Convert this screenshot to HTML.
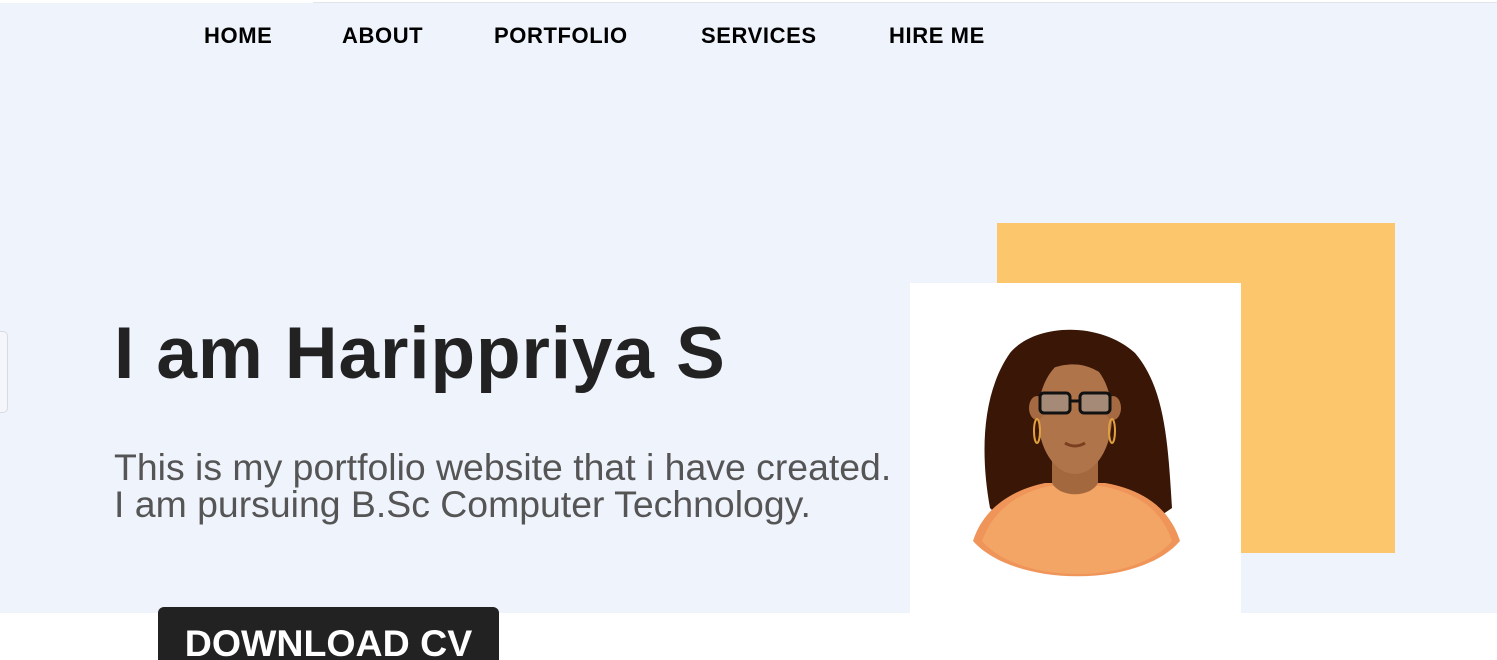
<!DOCTYPE html>
<html><head><style>
html,body{margin:0;width:1497px;height:660px;overflow:hidden}
body{background:#fff;font-family:"Liberation Sans",Arial,sans-serif;position:relative}
.bg{position:absolute;left:0;top:3px;width:1497px;height:610px;background:#eff3fc}
.topline{position:absolute;left:313px;top:2px;width:1184px;height:1px;background:#e2e4ea}
nav a{position:absolute;top:23px;font-size:22px;font-weight:bold;color:#000;text-decoration:none;letter-spacing:0.6px}
h1{position:absolute;left:114px;top:312px;margin:0;font-size:73px;font-weight:bold;color:#222;letter-spacing:0.9px}
p{position:absolute;left:114px;top:449px;margin:0;font-size:37.4px;line-height:37px;color:#555}
.btn{position:absolute;left:158px;top:607px;width:341px;height:70px;background:#222;border-radius:6px;color:#fff;font-size:37.5px;font-weight:bold;text-align:center;line-height:72px}
.orange{position:absolute;left:997px;top:223px;width:398px;height:330px;background:#fcc66c}
.card{position:absolute;left:910px;top:283px;width:331px;height:340px;background:#fff}
.tab{position:absolute;left:-10px;top:331px;width:16px;height:80px;border:1px solid #d8dbe3;border-radius:5px;background:#f4f6fc}
</style></head><body>
<div class="bg"></div><div class="topline"></div>
<nav><a style="left:204px">HOME</a><a style="left:342px">ABOUT</a><a style="left:494px">PORTFOLIO</a><a style="left:701px">SERVICES</a><a style="left:889px">HIRE ME</a></nav>
<div class="tab"></div>
<h1>I am Harippriya S</h1>
<p>This is my portfolio website that i have created.<br>I am pursuing B.Sc Computer Technology.</p>
<div class="btn">DOWNLOAD CV</div>
<div class="orange"></div>
<div class="card">
<svg width="331" height="340" viewBox="0 0 331 340">
<path d="M80 225 C70 170 72 110 100 70 C125 40 190 38 225 70 C255 105 258 160 262 225 L240 240 L95 240 Z" fill="#3a1606"/>
<path d="M63 258 C75 220 110 205 135 200 L195 200 C225 205 258 220 270 258 C230 305 105 305 63 258 Z" fill="#f0955a"/>
<path d="M72 258 C85 222 115 208 140 203 L190 203 C220 208 250 222 262 258 C225 302 110 302 72 258 Z" fill="#f3a565"/>
<path d="M142 170 L142 200 C150 215 180 215 188 200 L188 170 Z" fill="#a4683e"/>
<ellipse cx="165" cy="133" rx="37" ry="58" fill="#b0744a"/>
<ellipse cx="127" cy="125" rx="8" ry="12" fill="#a66a42"/>
<ellipse cx="203" cy="125" rx="8" ry="12" fill="#a66a42"/>
<path d="M122 95 C125 60 160 50 195 60 C205 75 210 90 208 105 C185 80 160 72 122 95Z" fill="#3a1606"/>
<rect x="130" y="110" width="30" height="20" rx="4" fill="#a58a78" stroke="#111" stroke-width="3"/>
<rect x="170" y="110" width="30" height="20" rx="4" fill="#a58a78" stroke="#111" stroke-width="3"/>
<path d="M160 118 L170 118" stroke="#111" stroke-width="3"/>
<path d="M155 160 Q165 166 175 160" stroke="#7a3f20" stroke-width="3" fill="none"/>
<ellipse cx="127" cy="148" rx="3" ry="12" fill="none" stroke="#e1a040" stroke-width="2"/>
<ellipse cx="202" cy="148" rx="3" ry="12" fill="none" stroke="#e1a040" stroke-width="2"/>
</svg>
</div>
</body></html>
